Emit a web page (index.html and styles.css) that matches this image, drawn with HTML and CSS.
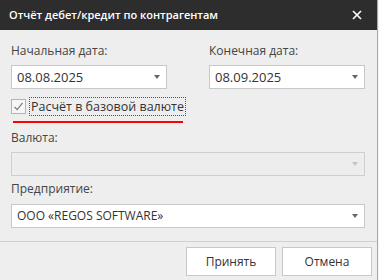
FILE: index.html
```html
<!DOCTYPE html>
<html lang="ru">
<head>
    <meta charset="UTF-8">
    <title>Отчёт дебет/кредит по контрагентам</title>
    <link rel="stylesheet" href="styles.css">
</head>
<body>

    <div class="dialog">
        <div class="dialog-header">
            <span class="dialog-title">Отчёт дебет/кредит по контрагентам</span>
            <button class="close-btn" title="Закрыть">
                <svg width="10" height="10" viewBox="0 0 10 10">
                    <path d="M1 1 L9 9 M9 1 L1 9" stroke="#fff" stroke-width="1.6" fill="none"/>
                </svg>
            </button>
        </div>

        <div class="dialog-body">
            <div class="date-row">
                <div class="field">
                    <label class="field-label">Начальная дата:</label>
                    <div class="combo">
                        <span class="combo-text date-text">08.08.2025</span>
                        <span class="combo-arrow"></span>
                    </div>
                </div>
                <div class="field">
                    <label class="field-label">Конечная дата:</label>
                    <div class="combo">
                        <span class="combo-text date-text">08.09.2025</span>
                        <span class="combo-arrow"></span>
                    </div>
                </div>
            </div>

            <div class="check-row">
                <span class="checkbox">
                    <svg width="11" height="11" viewBox="0 0 11 11">
                        <path d="M1.5 6 L4.2 8.6 L9.5 1.8" stroke="#777" stroke-width="1.1" fill="none"/>
                    </svg>
                </span>
                <span class="check-label">Расчёт в базовой валюте</span>
            </div>
            <div class="red-mark"></div>

            <div class="field">
                <label class="field-label">Валюта:</label>
                <div class="combo disabled">
                    <span class="combo-text"></span>
                    <span class="combo-arrow"></span>
                </div>
            </div>

            <div class="field field-company">
                <label class="field-label">Предприятие:</label>
                <div class="combo">
                    <span class="combo-text">ООО «REGOS SOFTWARE»</span>
                    <span class="combo-arrow"></span>
                </div>
            </div>
        </div>

        <div class="dialog-footer">
            <button class="btn">Принять</button>
            <button class="btn">Отмена</button>
        </div>
    </div>

</body>
</html>
```

FILE: styles.css
```css
body {
    margin: 0;
    background-color: #f4f4f0;
    font-family: "Open Sans", "Noto Sans", Arial, sans-serif;
    font-size: 12px;
    color: #444;
}
.dialog {
    width: 377px;
    height: 280px;
    background: #eeeeee;
    border-right: 1px solid #a8a8a8;
    display: flex;
    flex-direction: column;
}
.dialog-header {
    height: 30px;
    background: #2d2d2d;
    display: flex;
    align-items: center;
    justify-content: space-between;
    padding-left: 9px;
    padding-right: 15px;
}
.dialog-title {
    color: white;
    font-size: 11px;
    font-weight: 600;
}
.close-btn {
    background: none;
    border: none;
    padding: 0;
    width: 10px;
    height: 10px;
    display: flex;
    cursor: pointer;
}
.dialog-body {
    padding: 12px 12px 0 11px;
    flex: 1;
}
.date-row {
    display: grid;
    grid-template-columns: 156px 156px;
    column-gap: 42px;
}
.field-label {
    display: block;
    line-height: 18px;
    margin-bottom: 5px;
    color: #444;
}
.combo {
    height: 22px;
    background: white;
    border: 1px solid #c8c8c8;
    display: flex;
    align-items: center;
    justify-content: space-between;
    padding: 0 5px 0 5px;
    color: #333;
}
.date-text {
    font-size: 13px;
}
.combo.disabled {
    background: #ededed;
    border-color: #cfcfcf;
}
.combo-arrow {
    width: 0;
    height: 0;
    border-left: 3.5px solid transparent;
    border-right: 3.5px solid transparent;
    border-top: 4px solid #666;
    margin-right: 1px;
}
.disabled .combo-arrow {
    border-top-color: #c4c4c4;
}
.check-row {
    display: flex;
    align-items: center;
    height: 20px;
    margin-top: 8px;
}
.checkbox {
    width: 13px;
    height: 13px;
    border: 1px solid #b4b4b4;
    background: #f6f6f6;
    display: flex;
    align-items: center;
    justify-content: center;
    margin-right: 3px;
}
.check-label {
    border: 1px dotted #555;
    padding: 0 1px;
    line-height: 17px;
    font-size: 12.5px;
    color: #333;
}
.red-mark {
    width: 170px;
    height: 2px;
    background: red;
    margin: 4px 0 6px 2px;
}
.field-company {
    margin-top: 4px;
}
.field-company .field-label {
    margin-bottom: 6px;
}
.dialog-footer {
    border-top: 1px solid #cfcfcf;
    margin-top: 13px;
    display: flex;
    justify-content: flex-end;
    gap: 6px;
    padding: 5px 5px 0 0;
    height: 34px;
}
.btn {
    width: 90px;
    height: 29px;
    background: white;
    border: 1px solid #c8c8c8;
    font-family: inherit;
    font-size: 12px;
    color: #333;
    cursor: pointer;
}
```
